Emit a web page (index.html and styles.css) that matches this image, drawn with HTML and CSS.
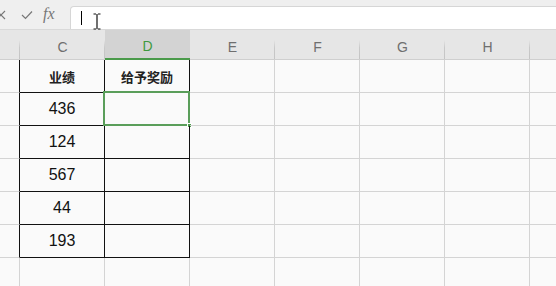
FILE: index.html
```html
<!DOCTYPE html>
<html>
<head>
<meta charset="utf-8">
<link rel="stylesheet" href="styles.css">
</head>
<body>
<div class="topbar">
  <div class="tools">
    <svg class="ic ic-x" width="10" height="10" viewBox="0 0 10 10"><path d="M1 1 L9 9 M9 1 L1 9" stroke="#777" stroke-width="1.2" fill="none"/></svg>
    <svg class="ic ic-ok" width="12" height="10" viewBox="0 0 12 10"><path d="M1 5 L4.5 8.5 L11 1.5" stroke="#777" stroke-width="1.2" fill="none"/></svg>
    <span class="fx">fx</span>
  </div>
  <div class="formula">
    <span class="caret"></span>
    <svg class="ibeam" width="8" height="17" viewBox="0 0 8 17"><path d="M0.5 1 H3 M5 1 H7.5 M4 1 V16 M0.5 16 H3 M5 16 H7.5" stroke="#111" stroke-width="1.2" fill="none"/></svg>
  </div>
</div>
<div class="sheet">
  <div class="row head">
    <div class="c first"></div>
    <div class="c">C</div>
    <div class="c sel">D</div>
    <div class="c">E</div>
    <div class="c">F</div>
    <div class="c">G</div>
    <div class="c">H</div>
    <div class="c last"></div>
  </div>
  <div class="row">
    <div class="c first tl"></div>
    <div class="c t bold">业绩</div>
    <div class="c t bold">给予奖励</div>
    <div class="c"></div><div class="c"></div><div class="c"></div><div class="c"></div><div class="c last"></div>
  </div>
  <div class="row">
    <div class="c first tl"></div>
    <div class="c t">436</div>
    <div class="c t active"><span class="handle"></span></div>
    <div class="c"></div><div class="c"></div><div class="c"></div><div class="c"></div><div class="c last"></div>
  </div>
  <div class="row">
    <div class="c first tl"></div>
    <div class="c t">124</div>
    <div class="c t"></div>
    <div class="c"></div><div class="c"></div><div class="c"></div><div class="c"></div><div class="c last"></div>
  </div>
  <div class="row">
    <div class="c first tl"></div>
    <div class="c t">567</div>
    <div class="c t"></div>
    <div class="c"></div><div class="c"></div><div class="c"></div><div class="c"></div><div class="c last"></div>
  </div>
  <div class="row">
    <div class="c first tl"></div>
    <div class="c t">44</div>
    <div class="c t"></div>
    <div class="c"></div><div class="c"></div><div class="c"></div><div class="c"></div><div class="c last"></div>
  </div>
  <div class="row">
    <div class="c first tl"></div>
    <div class="c t">193</div>
    <div class="c t"></div>
    <div class="c"></div><div class="c"></div><div class="c"></div><div class="c"></div><div class="c last"></div>
  </div>
  <div class="row tail">
    <div class="c first"></div>
    <div class="c"></div><div class="c"></div><div class="c"></div><div class="c"></div><div class="c"></div><div class="c"></div><div class="c last"></div>
  </div>
</div>
</body>
</html>
```

FILE: styles.css
```css
* { box-sizing: border-box; }
html, body { margin: 0; padding: 0; }
body {
  width: 556px;
  height: 286px;
  overflow: hidden;
  background: #fafafa;
  font-family: "Liberation Sans", Arial, "Noto Sans CJK SC", sans-serif;
}
.topbar {
  height: 30px;
  background: #efefef;
  display: flex;
  align-items: flex-start;
  border-bottom: 1px solid #d9d9d9;
}
.tools {
  width: 70px;
  height: 29px;
  display: flex;
  align-items: center;
  position: relative;
}
.ic-x { margin-left: -4px; margin-top: 1px; }
.ic-ok { margin-left: 15px; margin-top: 1px; }
.fx {
  margin-left: 10px;
  font-family: "Liberation Serif", serif;
  font-style: italic;
  font-size: 16px;
  color: #777;
  margin-top: -1px;
}
.formula {
  margin-top: 6px;
  height: 23px;
  flex: 1;
  margin-right: -10px;
  background: #fff;
  border: 1px solid #d6d6d6;
  border-bottom: none;
  border-radius: 4px 4px 0 0;
  display: flex;
  align-items: center;
  padding-left: 10px;
}
.caret {
  width: 1px;
  height: 14px;
  background: #000;
  margin-top: -1px;
}
.ibeam { margin-left: 11px; margin-top: 6px; }
.sheet { display: flex; flex-direction: column; }
.row { display: flex; height: 33px; }
.c {
  width: 85px;
  flex: none;
  border-right: 1px solid #d4d4d4;
  border-bottom: 1px solid #d4d4d4;
  display: flex;
  align-items: center;
  justify-content: center;
  font-size: 16px;
  color: #111;
  position: relative;
}
.c.first { width: 20px; }
.c.last { flex: 1; border-right: none; }
.row.head { height: 30px; background: #e6e6e6; }
.row.head .c {
  border-right: none;
  border-bottom: 1px solid #cfcfcf;
  color: #6f6f6f;
  font-size: 14px;
  padding-top: 4px;
}
.row.head .c::after {
  content: "";
  position: absolute;
  right: 0;
  top: 10px;
  bottom: 0;
  width: 1px;
  background: linear-gradient(#e6e6e6, #c9c9c9 40%, #c4c4c4);
}
.row.head .c.last::after { display: none; }
.row.head .c.sel {
  background: #d3d3d3;
  color: #3f9a3f;
  border-bottom: 2px solid #4a9a4a;
}
.row.head .c.sel::after { display: none; }
.c.tl { border-right-color: #111; }
.c.t { border-right-color: #111; border-bottom-color: #111; }
.c.bold {
  font-family: "Noto Sans CJK SC", sans-serif;
  font-weight: 700;
  font-size: 13px;
  color: #222;
}
.c.active::before {
  content: "";
  position: absolute;
  left: -2px;
  top: -2px;
  right: -1px;
  bottom: -1px;
  border: 2px solid #5a9e5a;
}
.handle {
  position: absolute;
  right: -3px;
  bottom: -3px;
  width: 5px;
  height: 5px;
  background: #4a9a4a;
  border: 1px solid #fff;
}
.row.tail { height: 40px; }
```
